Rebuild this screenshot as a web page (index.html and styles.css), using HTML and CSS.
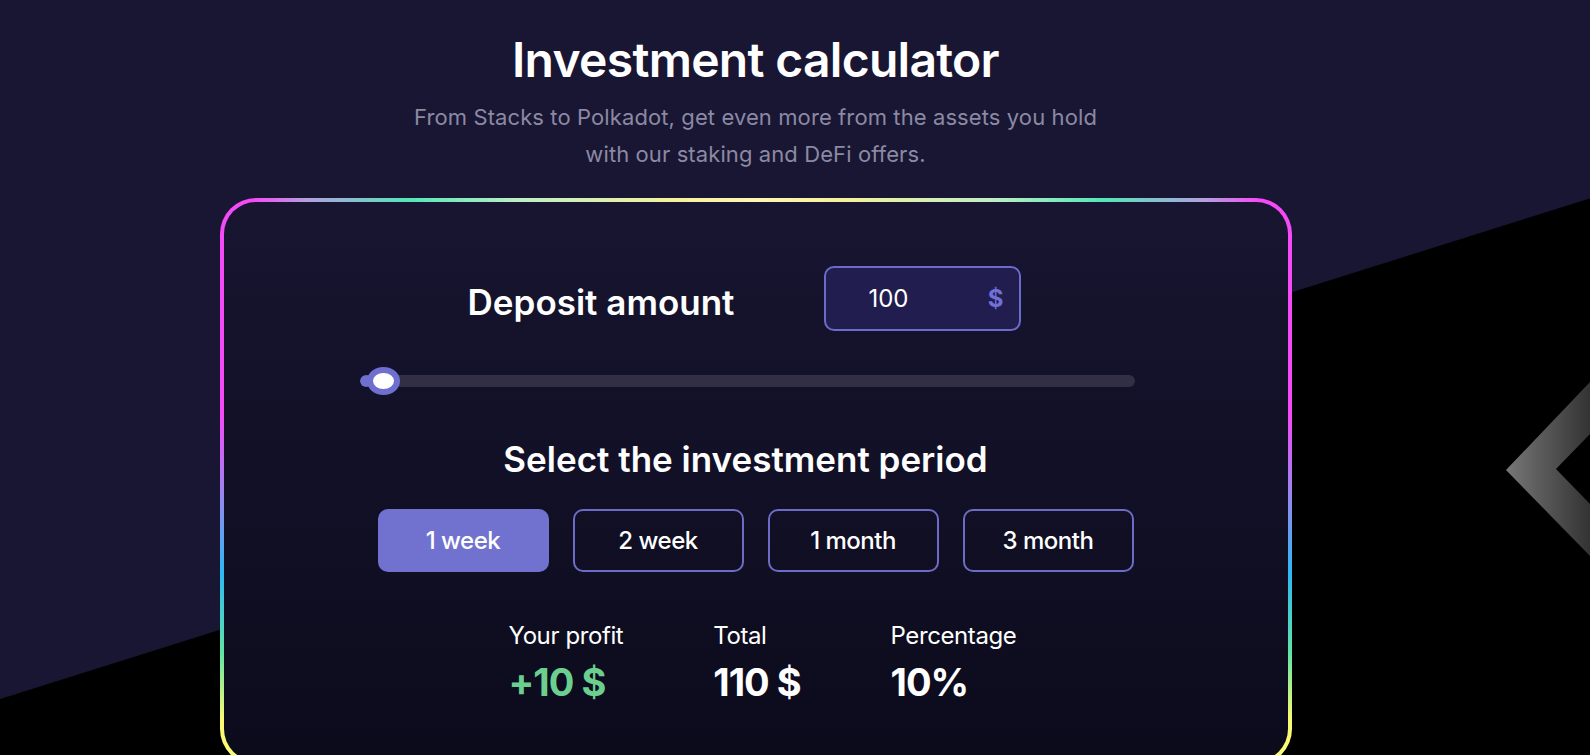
FILE: index.html
```html
<!DOCTYPE html>
<html lang="en">
<head>
<meta charset="utf-8">
<title>Investment calculator</title>
<link rel="stylesheet" href="styles.css">
</head>
<body>
<svg class="chevron" width="90" height="190" viewBox="0 0 90 190" aria-hidden="true">
  <defs>
    <linearGradient id="chev" x1="0" y1="0" x2="1" y2="0">
      <stop offset="0" stop-color="#777777"/>
      <stop offset="1" stop-color="#333333"/>
    </linearGradient>
  </defs>
  <polygon points="6,100 90,12 90,64 56,99 90,134 90,186" fill="url(#chev)"/>
</svg>
<main class="page">
  <header class="intro">
    <h1 class="title">Investment calculator</h1>
    <p class="subtitle">From Stacks to Polkadot, get even more from the assets you hold<br>with our staking and DeFi offers.</p>
  </header>
  <section class="card-frame">
    <div class="card">
      <div class="deposit-row">
        <h2 class="deposit-label">Deposit amount</h2>
        <div class="amount-field">
          <span class="amount-value">100</span>
          <span class="amount-currency">$</span>
        </div>
      </div>
      <div class="slider">
        <div class="slider-track"><div class="slider-fill" style="width:12px"></div></div>
        <div class="slider-thumb"></div>
      </div>
      <h2 class="period-title">Select the investment period</h2>
      <div class="periods">
        <button class="period is-active">1 week</button>
        <button class="period">2 week</button>
        <button class="period">1 month</button>
        <button class="period">3 month</button>
      </div>
      <div class="stats">
        <div class="stat">
          <span class="stat-label">Your profit</span>
          <span class="stat-value is-profit">+10 $</span>
        </div>
        <div class="stat">
          <span class="stat-label">Total</span>
          <span class="stat-value">110 $</span>
        </div>
        <div class="stat">
          <span class="stat-label">Percentage</span>
          <span class="stat-value">10%</span>
        </div>
      </div>
    </div>
  </section>
</main>
</body>
</html>
```

FILE: styles.css
```css
* { box-sizing: border-box; }

html, body {
  margin: 0;
  padding: 0;
}

body {
  position: relative;
  width: 100vw;
  height: 100vh;
  overflow: hidden;
  font-family: "Inter", "Noto Sans", sans-serif;
  color: #ffffff;
  background: linear-gradient(162.52deg, #181633 55.62%, #000000 55.72%);
}

.chevron {
  position: absolute;
  left: 1500px;
  top: 370px;
}

.page {
  display: flex;
  flex-direction: column;
  align-items: center;
  padding-right: 79px;
}

.intro {
  display: flex;
  flex-direction: column;
  align-items: center;
  text-align: center;
}

.title {
  margin: 31px 0 0;
  font-size: 48px;
  line-height: 58px;
  font-weight: 600;
  letter-spacing: -0.7px;
}

.subtitle {
  margin: 10px 0 0;
  font-size: 22px;
  line-height: 37px;
  font-weight: 400;
  color: #8c89a3;
  letter-spacing: 0.1px;
}

.card-frame {
  margin-top: 25px;
  width: 1072px;
  padding: 4px;
  border-radius: 36px;
  background:
    linear-gradient(90deg, #f54af7 0%, #f54af7 3%, #b49ee0 8%, #55e6b9 17.5%, #bfeec6 28%, #f4f29c 42%, #fff6b4 50%, #f4f29c 58%, #bfeec6 72%, #55e6b9 82.5%, #b49ee0 92%, #f54af7 97%, #f54af7 100%) top left / 100% 5px no-repeat,
    linear-gradient(180deg, #f54af7 0%, #f54af7 38%, #9b84ee 52%, #2fb8f2 66%, #5fe3a8 80%, #fbfb73 92%, #fbfb73 100%);
}

.card {
  display: flex;
  flex-direction: column;
  align-items: center;
  border-radius: 32px;
  background: linear-gradient(180deg, #171530 0%, #0c0b1c 100%);
  padding: 64px 0 56px;
}

.deposit-row {
  display: flex;
  align-items: center;
  gap: 90px;
  margin-right: 22px;
}

.deposit-label {
  margin: 6px 0 0;
  font-size: 35px;
  line-height: 40px;
  font-weight: 600;
  letter-spacing: 0;
}

.amount-field {
  display: flex;
  align-items: center;
  justify-content: space-between;
  width: 197px;
  height: 65px;
  padding: 0 16px 0 42px;
  border: 2px solid #6b6bc9;
  border-radius: 10px;
  background: #221d4f;
}

.amount-value {
  font-size: 24px;
  font-weight: 400;
}

.amount-currency {
  font-size: 24px;
  font-weight: 700;
  color: #7070d6;
}

.slider {
  position: relative;
  display: flex;
  align-items: center;
  width: 775px;
  height: 28px;
  margin-top: 36px;
  margin-right: 16px;
}

.slider-track {
  width: 100%;
  height: 12px;
  border-radius: 6px;
  background: #322f45;
  overflow: hidden;
}

.slider-fill {
  height: 100%;
  border-radius: 6px;
  background: #6f6fcf;
}

.slider-thumb {
  position: absolute;
  left: 7px;
  top: 0;
  width: 33px;
  height: 28px;
  border: 6px solid #6f6fcf;
  border-radius: 50%;
  background: #ffffff;
}

.period-title {
  margin: 44px 20px 0 0;
  font-size: 35px;
  line-height: 40px;
  font-weight: 600;
  letter-spacing: 0;
}

.periods {
  display: flex;
  gap: 24px;
  margin-top: 30px;
}

.period {
  width: 171px;
  height: 63px;
  border: 2px solid #6c6cc8;
  border-radius: 10px;
  background: transparent;
  color: #ffffff;
  font-family: inherit;
  font-size: 24px;
  font-weight: 500;
  letter-spacing: -0.5px;
  cursor: pointer;
}

.period.is-active {
  background: #7172d0;
  border-color: #7172d0;
}

.stats {
  display: flex;
  gap: 90px;
  margin-top: 50px;
  margin-left: 14px;
}

.stat {
  display: flex;
  flex-direction: column;
  gap: 9px;
}

.stat-label {
  font-size: 24px;
  line-height: 28px;
  font-weight: 400;
  letter-spacing: -0.4px;
}

.stat-value {
  font-size: 38px;
  line-height: 46px;
  font-weight: 700;
  letter-spacing: -1px;
}

.stat-value.is-profit {
  color: #6bd08f;
}
```
